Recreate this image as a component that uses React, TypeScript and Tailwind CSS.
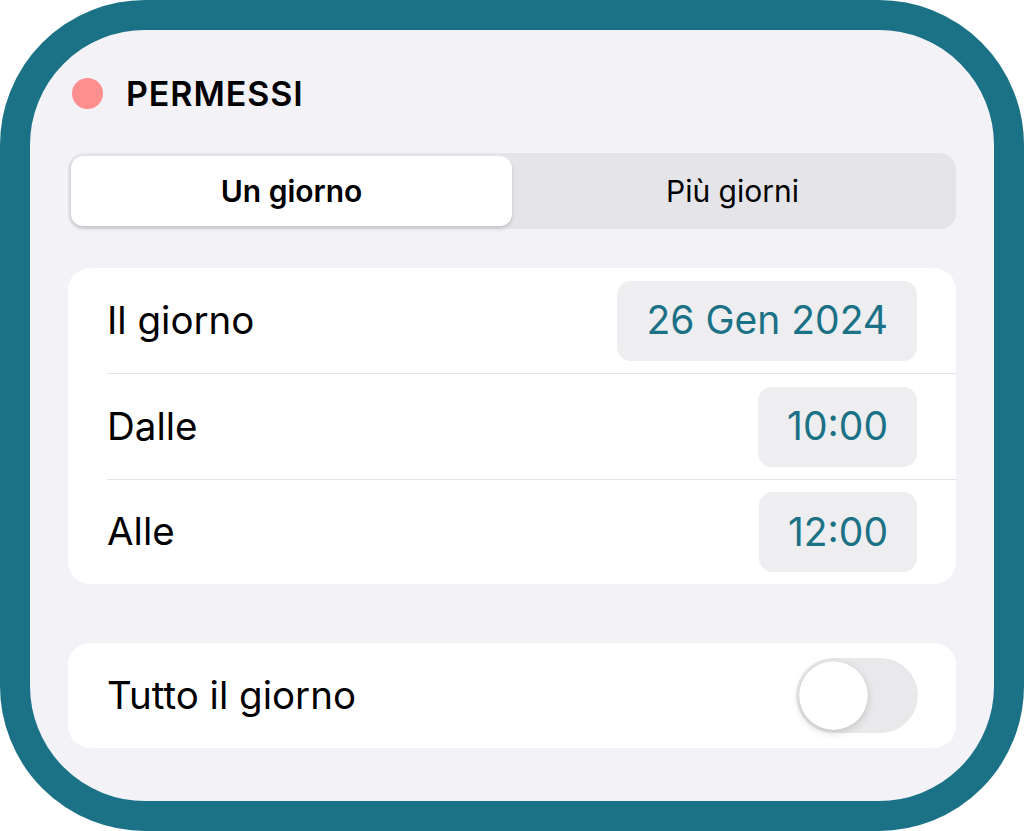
import { useState } from 'react';

type Mode = 'one' | 'many';

const rows = [
  { label: 'Il giorno', value: '26 Gen 2024' },
  { label: 'Dalle', value: '10:00' },
  { label: 'Alle', value: '12:00' },
];

export default function App() {
  const [mode, setMode] = useState<Mode>('one');
  const [allDay, setAllDay] = useState(false);

  return (
    <div className="w-[1024px] h-[831px] bg-white font-['Inter',sans-serif] text-black">
      <div className="h-full rounded-[145px] border-[30px] border-[#1b7186] bg-[#f2f2f7] px-[38px] pt-[43px]">
        {/* Header */}
        <div className="flex items-center h-10 pl-1 gap-[23px]">
          <span className="w-[31px] h-[31px] rounded-full bg-[#ff8f8f]" />
          <h1 className="text-[34px] font-semibold tracking-[0.9px]">PERMESSI</h1>
        </div>

        {/* Segmented control */}
        <div className="mt-10 h-[76px] rounded-[16px] bg-[#e4e4e9] p-[3px] flex">
          {[
            { id: 'one', label: 'Un giorno' },
            { id: 'many', label: 'Più giorni' },
          ].map((seg) => (
            <button
              key={seg.id}
              onClick={() => setMode(seg.id as Mode)}
              className={
                mode === seg.id
                  ? 'flex-1 rounded-[12px] bg-white text-[30px] font-semibold shadow-[0_3px_4px_rgba(0,0,0,0.12),0_0_1px_rgba(0,0,0,0.1)]'
                  : 'flex-1 rounded-[12px] text-[30px] font-normal'
              }
            >
              {seg.label}
            </button>
          ))}
        </div>

        {/* Date / time card */}
        <div className="mt-[39px] bg-white rounded-[22px]">
          {rows.map((row, i) => (
            <div key={row.label} className="pl-[39px]">
              <div
                className={
                  i < rows.length - 1
                    ? 'h-[106px] flex items-center justify-between pr-[39px] border-b border-[#e3e3e8]'
                    : 'h-[104px] flex items-center justify-between pr-[39px]'
                }
              >
                <span className="text-[38.5px]">{row.label}</span>
                <button className="h-[80px] px-[29px] rounded-[14px] bg-[#eeeef0] text-[39px] text-[#1b7186]">
                  {row.value}
                </button>
              </div>
            </div>
          ))}
        </div>

        {/* All day */}
        <div className="mt-[59px] h-[105px] bg-white rounded-[22px] flex items-center justify-between pl-[39px] pr-[38px]">
          <span className="text-[38.5px]">Tutto il giorno</span>
          <button
            onClick={() => setAllDay(!allDay)}
            className={
              allDay
                ? 'w-[122px] h-[75px] rounded-full bg-[#1b7186] p-[3px] flex justify-end'
                : 'w-[122px] h-[75px] rounded-full bg-[#e9e9eb] p-[3px] flex justify-start'
            }
          >
            <span className="w-[69px] h-[69px] rounded-full bg-white shadow-[0_3px_8px_rgba(0,0,0,0.15),0_0_1px_rgba(0,0,0,0.2)]" />
          </button>
        </div>
      </div>
    </div>
  );
}
